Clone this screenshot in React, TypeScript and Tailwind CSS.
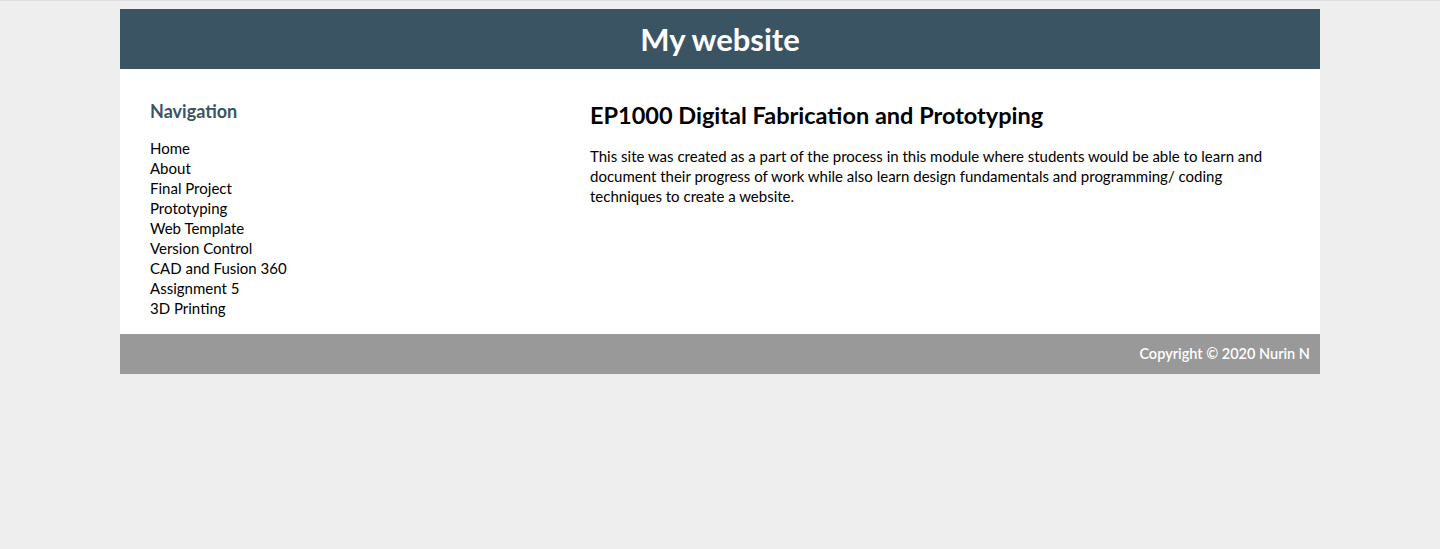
const links = [
  'Home',
  'About',
  'Final Project',
  'Prototyping',
  'Web Template',
  'Version Control',
  'CAD and Fusion 360',
  'Assignment 5',
  '3D Printing',
];

export default function App() {
  return (
    <div
      className="min-h-[549px] bg-[#eeeeee] border-t border-[#dddddd] pt-2 text-black"
      style={{ fontFamily: "Lato, 'Noto Sans', sans-serif" }}
    >
      <div className="mx-auto w-[1200px]">
        <header className="h-[60px] bg-[#3b5463] flex items-center justify-center">
          <h1 className="text-[31px] font-bold text-white leading-[40px] -mt-[1px]">My website</h1>
        </header>

        <div className="bg-white flex px-[30px] pt-[30px] pb-[16px]">
          <nav className="w-[440px] shrink-0">
            <h2 className="text-[18px] font-bold text-[#3b5463] leading-[24px]">Navigation</h2>
            <ul className="mt-[15px] text-[15px] leading-[20px]">
              {links.map((l) => (
                <li key={l}>
                  <a href="#">{l}</a>
                </li>
              ))}
            </ul>
          </nav>
          <main className="w-[700px]">
            <h2 className="text-[23.5px] font-bold leading-[32px]">EP1000 Digital Fabrication and Prototyping</h2>
            <p className="mt-[15px] text-[15px] leading-[20px]">
              This site was created as a part of the process in this module where students would be able to learn and
              document their progress of work while also learn design fundamentals and programming/ coding
              techniques to create a website.
            </p>
          </main>
        </div>

        <footer className="h-[40px] bg-[#999999] flex items-center justify-end px-[10px]">
          <span className="text-[14.5px] font-semibold text-white">Copyright © 2020 Nurin N</span>
        </footer>
      </div>
    </div>
  );
}
